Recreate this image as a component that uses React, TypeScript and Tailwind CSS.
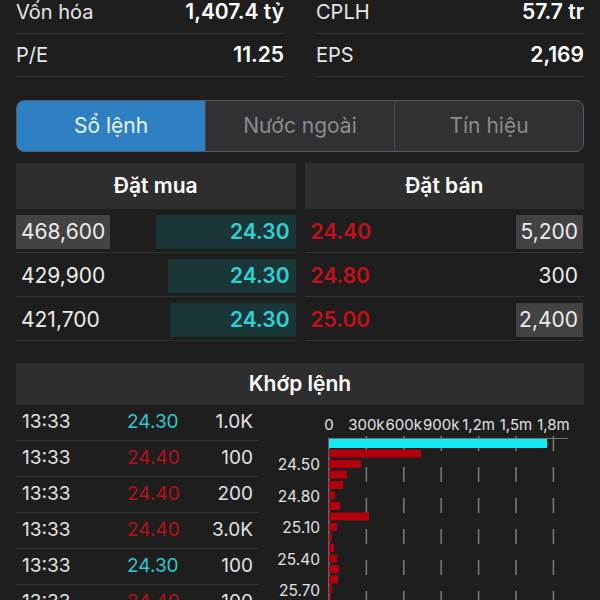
import React from 'react';

const stats = [
  { label: 'Vốn hóa', value: '1,407.4 tỷ' },
  { label: 'CPLH', value: '57.7 tr' },
  { label: 'P/E', value: '11.25' },
  { label: 'EPS', value: '2,169' },
];

const tabs = ['Sổ lệnh', 'Nước ngoài', 'Tín hiệu'];

const buys = [
  { qty: '468,600', price: '24.30', bar: 'w-[140px]', hl: true },
  { qty: '429,900', price: '24.30', bar: 'w-[128px]', hl: false },
  { qty: '421,700', price: '24.30', bar: 'w-[126px]', hl: false },
];

const sells = [
  { price: '24.40', qty: '5,200', hl: true },
  { price: '24.80', qty: '300', hl: false },
  { price: '25.00', qty: '2,400', hl: true },
];

const trades = [
  { time: '13:33', price: '24.30', vol: '1.0K', up: true },
  { time: '13:33', price: '24.40', vol: '100', up: false },
  { time: '13:33', price: '24.40', vol: '200', up: false },
  { time: '13:33', price: '24.40', vol: '3.0K', up: false },
  { time: '13:33', price: '24.30', vol: '100', up: true },
  { time: '13:33', price: '24.40', vol: '100', up: false },
];

// volume per price step, in px from the axis
const redBars = [92, 32, 18, 14, 6, 11, 40, 8, 3, 5, 8, 10, 9, 3, 2];
const ticks = ['0', '300k', '600k', '900k', '1,2m', '1,5m', '1,8m'];
const priceLabels = ['24.50', '24.80', '25.10', '25.40', '25.70'];

const VolumeChart: React.FC = () => {
  const x0 = 70;
  const step = 37.4;
  return (
    <svg width="341" height="195" className="block shrink-0">
      {ticks.map((t, i) => (
        <text
          key={t}
          x={x0 + i * step}
          y={21}
          textAnchor="middle"
          dominantBaseline="middle"
          fill="#e2e2e2"
          fontSize="15"
          fontFamily="Inter, sans-serif"
        >
          {t}
        </text>
      ))}
      {ticks.slice(1).map((t, i) => (
        <line
          key={t}
          x1={x0 + (i + 1) * step}
          x2={x0 + (i + 1) * step}
          y1={31}
          y2={195}
          stroke="#7c7c7c"
          strokeWidth="1.5"
          strokeDasharray="15 16"
        />
      ))}
      <line x1={x0} x2={309} y1={33.5} y2={33.5} stroke="#777" strokeWidth="1" />
      <line x1={x0} x2={x0} y1={33} y2={195} stroke="#777" strokeWidth="1.5" />
      <rect x={x0} y={34} width={218} height={9} fill="#12e9f2" />
      {redBars.map((w, i) => (
        <rect key={i} x={x0} y={34 + (i + 1) * 10.5} width={w} height={8} fill="#b3000d" />
      ))}
      {priceLabels.map((p, i) => (
        <text
          key={p}
          x={61}
          y={61 + i * 31.5}
          textAnchor="end"
          dominantBaseline="middle"
          fill="#e2e2e2"
          fontSize="15.5"
          fontFamily="Inter, sans-serif"
        >
          {p}
        </text>
      ))}
    </svg>
  );
};

export default function App() {
  return (
    <div className="w-[600px] h-[600px] overflow-hidden bg-[#1e1e1e] px-4 font-['Inter',sans-serif] text-white">
      {/* stats */}
      <div className="-mt-[9px] grid grid-cols-2 gap-x-8">
        {stats.map((s) => (
          <div key={s.label} className="h-[43px] flex items-center justify-between border-b border-[#333335]">
            <span className="text-[20px] text-[#e6e6e6]">{s.label}</span>
            <span className="text-[21px] font-semibold">{s.value}</span>
          </div>
        ))}
      </div>

      {/* tabs */}
      <div className="mt-[23px] h-[52px] flex rounded-lg border-[1.5px] border-[#4c5d70] overflow-hidden bg-[#313133]">
        {tabs.map((t, i) => (
          <div
            key={t}
            className={
              i === 0
                ? 'flex-1 flex items-center justify-center bg-[#2f80c3] text-[21px] text-[#eaf4ff]'
                : 'flex-1 flex items-center justify-center border-l border-[#4a4a4e] text-[21px] text-[#8b8b90]'
            }
          >
            {t}
          </div>
        ))}
      </div>

      {/* order book */}
      <div className="mt-[11px] grid grid-cols-2 gap-[9px]">
        <div>
          <div className="h-[46px] flex items-center justify-center bg-[#2e2e2e] text-[21px] font-semibold">Đặt mua</div>
          {buys.map((b) => (
            <div key={b.qty} className="pt-[6px] pb-[3px] flex items-center justify-between border-b border-[#333335]">
              <div className={b.hl ? 'w-[94px] h-[34px] flex items-center pl-[5px] bg-[#434343]' : 'h-[34px] flex items-center pl-[5px]'}>
                <span className="text-[21px] text-[#ececec]">{b.qty}</span>
              </div>
              <div className={`${b.bar} h-[34px] flex items-center justify-end pr-[6px] bg-[#1b3637]`}>
                <span className="text-[21px] font-semibold text-[#2fd2d4]">{b.price}</span>
              </div>
            </div>
          ))}
        </div>
        <div>
          <div className="h-[46px] flex items-center justify-center bg-[#2e2e2e] text-[21px] font-semibold">Đặt bán</div>
          {sells.map((s) => (
            <div key={s.price} className="pt-[6px] pb-[3px] flex items-center justify-between border-b border-[#333335]">
              <div className="h-[34px] flex items-center pl-[6px]">
                <span className="text-[21px] font-semibold text-[#c4101a]">{s.price}</span>
              </div>
              <div className={s.hl ? 'w-[67px] mr-px h-[34px] flex items-center justify-end pr-[5px] bg-[#434343]' : 'h-[34px] mr-px flex items-center justify-end pr-[5px]'}>
                <span className="text-[21px] text-[#ececec]">{s.qty}</span>
              </div>
            </div>
          ))}
        </div>
      </div>

      {/* matched orders */}
      <div className="mt-[22px] h-[42px] flex items-center justify-center bg-[#2e2e2e] text-[21px] font-semibold">Khớp lệnh</div>
      <div className="flex">
        <div className="w-[243px] shrink-0">
          {trades.map((t, i) => (
            <div key={i} className="h-[36px] flex items-center px-[6px] border-b border-[#333335]">
              <span className="w-[105px] text-[19px] text-[#e2e2e2]">{t.time}</span>
              <span className={t.up ? 'text-[19px] text-[#2fc9cb]' : 'text-[19px] text-[#b3101a]'}>{t.price}</span>
              <span className="ml-auto text-[19px] text-[#e2e2e2]">{t.vol}</span>
            </div>
          ))}
        </div>
        <VolumeChart />
      </div>
    </div>
  );
}
